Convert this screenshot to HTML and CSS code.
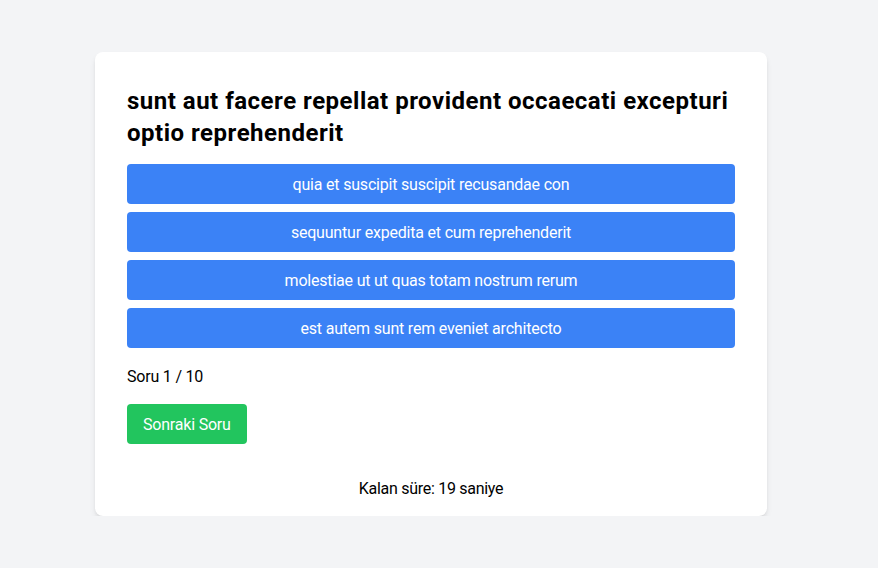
FILE: index.html
```html
<!DOCTYPE html>
<html lang="tr">
<head>
<meta charset="utf-8">
<title>Quiz</title>
<link rel="stylesheet" href="styles.css">
</head>
<body>
<main class="page">
  <section class="card">
    <h1 class="question">sunt aut facere repellat provident occaecati excepturi optio reprehenderit</h1>
    <div class="options">
      <button class="option">quia et suscipit suscipit recusandae con</button>
      <button class="option">sequuntur expedita et cum reprehenderit</button>
      <button class="option">molestiae ut ut quas totam nostrum rerum</button>
      <button class="option">est autem sunt rem eveniet architecto</button>
    </div>
    <p class="counter">Soru 1 / 10</p>
    <button class="next">Sonraki Soru</button>
    <p class="timer">Kalan süre: 19 saniye</p>
  </section>
</main>
</body>
</html>
```
FILE: styles.css
```css
* { box-sizing: border-box; }
html, body {
  margin: 0;
  padding: 0;
  background: #f3f4f6;
  font-family: Roboto, "Noto Sans", sans-serif;
  color: #000;
}
.page {
  width: 862px;
  padding-top: 52px;
  display: flex;
  justify-content: center;
}
.card {
  width: 672px;
  background: #fff;
  border-radius: 8px;
  box-shadow: 0 4px 6px -1px rgba(0,0,0,0.1), 0 2px 4px -2px rgba(0,0,0,0.1);
  padding: 32px 32px 15px;
}
.question {
  margin: 0 0 16px;
  padding-top: 1px;
  height: 64px;
  font-size: 24px;
  line-height: 32px;
  font-weight: 700;
  letter-spacing: 0.5px;
}
.options {
  display: flex;
  flex-direction: column;
  gap: 8px;
}
.option, .next {
  border: 0;
  border-radius: 4px;
  color: #fff;
  font: inherit;
  font-size: 16px;
  line-height: 24px;
  padding: 9px 16px 7px;
  letter-spacing: -0.2px;
  cursor: pointer;
}
.option {
  width: 100%;
  background: #3b82f6;
  text-align: center;
}
.counter {
  margin: 16px 0 0;
  padding: 1px 0 0;
  height: 24px;
  font-size: 16px;
  line-height: 24px;
  letter-spacing: -0.2px;
}
.next {
  margin-top: 16px;
  background: #22c55e;
}
.timer {
  margin: 33px 0 0;
  text-align: center;
  font-size: 16px;
  line-height: 24px;
  letter-spacing: -0.28px;
}
```
